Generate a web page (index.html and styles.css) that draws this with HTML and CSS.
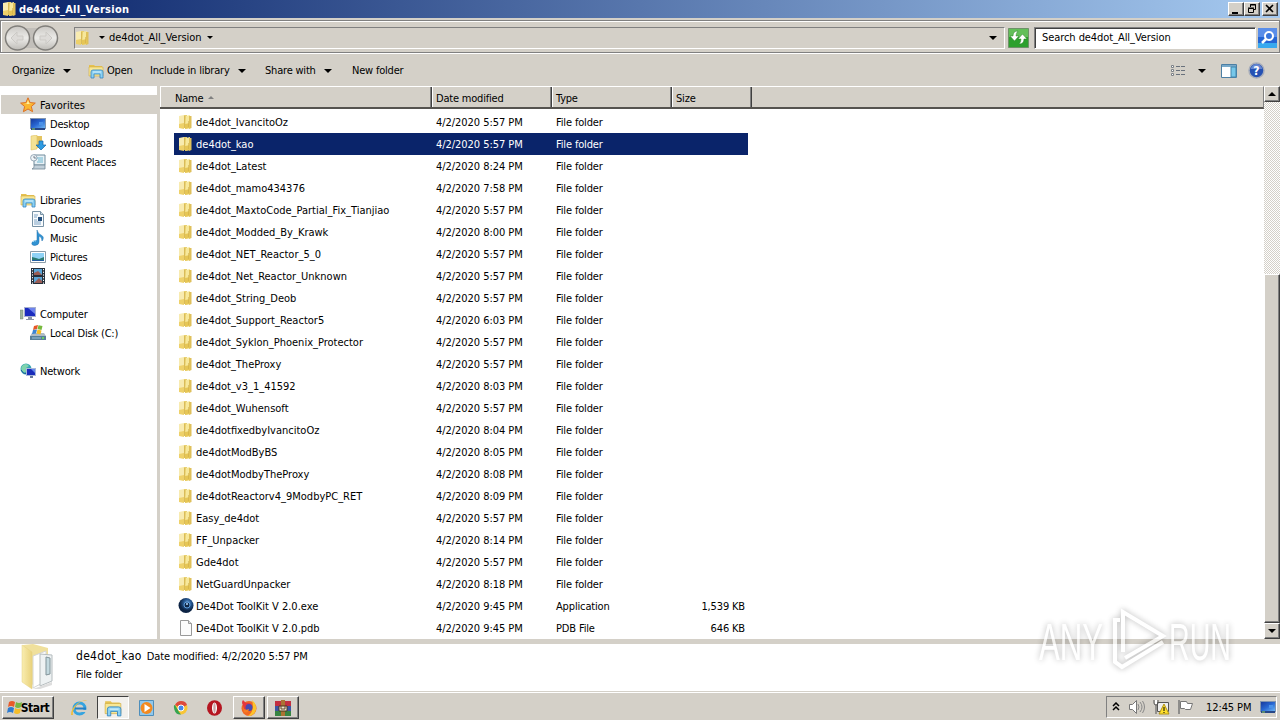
FILE: index.html
```html
<!DOCTYPE html>
<html lang="en">
<head>
    <meta charset="UTF-8">
    <meta name="viewport" content="width=device-width, initial-scale=1.0">
    <title>de4dot_All_Version</title>
    <link rel="stylesheet" href="styles.css">
</head>
<body>
    <svg class="defs" width="0" height="0">
        <defs>
            <linearGradient id="gold"><stop offset="0" stop-color="#f9edb0"/><stop offset="1" stop-color="#e9d27c"/></linearGradient>
            <linearGradient id="blue" x1="0" y1="0" x2="1" y2="1"><stop offset="0" stop-color="#173a9c"/><stop offset=".5" stop-color="#2867d2"/><stop offset="1" stop-color="#6db5f3"/></linearGradient>
            <linearGradient id="pale" x2="0" y2="1"><stop offset="0" stop-color="#c9c7c3"/><stop offset=".5" stop-color="#ecebe8"/><stop offset="1" stop-color="#bdbbb6"/></linearGradient>
            <radialGradient id="orb" cx=".6" cy=".35"><stop offset="0" stop-color="#79aade"/><stop offset=".5" stop-color="#255791"/><stop offset="1" stop-color="#0c2344"/></radialGradient>
        </defs>
        <symbol id="folder" viewBox="0 0 16 16">
            <path d="M1 2 6 1v13l-5-1z" fill="#f8ebb0"/>
            <path d="M6 1h3v13H6z" fill="#e8cf6e"/>
            <path d="M8 2 12 1v13l-5 1z" fill="#f7e89b"/>
            <path d="M11 2h2.500v12l-2.500 1z" fill="#dfc05a"/>
            <path d="M1 10 6 9v6l-5-1z" fill="#eed16a"/>
            <path d="M7 10 12 9v5l-5 1z" fill="#e6c656"/>
            <path d="M6.500 2v12M10.500 7v6" stroke="#cfad4a" stroke-width=".6"/>
        </symbol>
        <symbol id="library" viewBox="0 0 16 16">
            <path d="M1 2h5l1 1h7v9H1z" fill="#e5c150"/>
            <path d="M1 4h14v9H1z" fill="#f8e795" stroke="#d0ac45" stroke-width=".6"/>
            <path d="M3 15V9q0-2 2-2h8q2 0 2 2v6h-3v-4H6v4z" fill="#8cd1f2" stroke="#3587c1" stroke-width=".8"/>
            <path d="M5 9h8" stroke="#d6f2fd"/>
        </symbol>
        <symbol id="star" viewBox="0 0 16 16">
            <path d="m8 .8 2.1 4.8 5.2.5-4 3.4 1.3 5.2L8 12l-4.6 2.7 1.2-5.2-4-3.4 5.3-.5z" fill="#fbb630" stroke="#dd7125"/>
            <path d="m8 3 1.2 3.6 3 .3H4l2.8-.3z" fill="#fff0a1"/>
        </symbol>
        <symbol id="desktop" viewBox="0 0 16 16">
            <path d="M0 2h16v11H0z" fill="#8295af"/><path d="M1 3h14v9H1z" fill="url(#blue)"/>
            <path d="M1 12h14v2H1z" fill="#274787"/><path d="M9 6h4v3H9z" fill="#4a91e8"/><path d="M2 13h3" stroke="#8bd05f"/>
        </symbol>
        <symbol id="download" viewBox="0 0 16 16">
            <path d="M1 1 7 0v14l-6 1z" fill="#f5e295" stroke="#d8b957" stroke-width=".5"/><path d="M7 1h5v12H7z" fill="#e4c461"/>
            <path d="M9 6h4v4h3l-5 5-5-5h3z" fill="#2e9be2" stroke="#1765a7" stroke-width=".7"/>
        </symbol>
        <symbol id="recent" viewBox="0 0 16 16">
            <path d="M4 1h11v10H4z" fill="#e8f1f6" stroke="#718c9c"/><path d="M6 4h7M8 6h5M7 8h6" stroke="#6cb6cf"/>
            <path d="M4 11h11v4H2q3-1 2-4z" fill="#c2d0da" stroke="#6f8594" stroke-width=".8"/>
            <circle cx="3.8" cy="3.8" r="3.2" fill="#f0f5f8" stroke="#8398a8" stroke-width=".8"/><path d="M4 2v2h2" fill="none" stroke="#456" stroke-width=".7"/>
        </symbol>
        <symbol id="doc" viewBox="0 0 16 16">
            <path d="M2.500.5h8l3 3v12h-11z" fill="#f8fbfd" stroke="#7892a5"/><path d="M10.500.5v3h3" fill="#cbdbe6" stroke="#7892a5"/>
            <path d="M4 4h4M4 6h3M4 11h7M4 13h7M4 9h3" stroke="#7da2c4"/><path d="M8 6h4v4H8z" fill="#244f7d"/>
        </symbol>
        <symbol id="music" viewBox="0 0 16 16">
            <path d="M7 0q1 4 4 5 4 2 1 6 0-4-3-5v6q0 3-4 3.500-4 0-3-3 1-2 5-2z" fill="#3193d3" stroke="#1f70ae" stroke-width=".5"/><path d="M3 12q1-2 3-1" stroke="#a2dcf8" fill="none"/>
        </symbol>
        <symbol id="picture" viewBox="0 0 16 16">
            <path d="M.5 2.500h15v11H.5z" fill="#fff" stroke="#8b9ca8"/><path d="M2 4h12v8H2z" fill="#8fd2f5"/><path d="m2 8 4 1 3 1 5-2v4H2z" fill="#2a7b72"/><path d="M2 11h12v1H2z" fill="#225ea2"/>
        </symbol>
        <symbol id="video" viewBox="0 0 16 16">
            <path d="M1 0h14v16H1z" fill="#26303b"/><path d="M4 1h8v6H4zM4 9h8v6H4z" fill="#5aa5d7"/><path d="m4 5 4-2 4 4H4zM5 14l4-4 3 3v2H4z" fill="#9a5c54"/>
            <path d="M2.500 1v15M13.500 1v15" stroke="#fff" stroke-dasharray="1.200 1.500"/>
        </symbol>
        <symbol id="computer" viewBox="0 0 16 16">
            <path d="M0 4h3v9H0z" fill="#9eb49c" stroke="#718879" stroke-width=".5"/><path d="M4 1h12v10H4z" fill="#a6b0cf"/><path d="M5 2h10v8H5z" fill="#1a2bbf"/><path d="m8 2 7 0v6z" fill="#6d83ed"/><path d="M8 11h4v2h2v1H6v-1h2z" fill="#8994a9"/>
        </symbol>
        <symbol id="disk" viewBox="0 0 16 16">
            <path d="m2 8-2 3v4h16v-4l-2-3z" fill="#aebbc5"/><path d="M0 11h16v4H0z" fill="#587f98"/><path d="M2 13h9" stroke="#9ac2d9"/><path d="M12 12h2v2h-2z" fill="#6ad060"/>
            <path d="m4 1 4-1-1 4-4 1z" fill="#e75726"/><path d="m8.500.3 4 .7-1 4-4-1z" fill="#77b93c"/><path d="m3 5 4-.5-1 4-4 .5z" fill="#3c85d3"/><path d="m7.500 4.500 4 1-1 4-4-1z" fill="#f5bd25"/>
        </symbol>
        <symbol id="network" viewBox="0 0 16 16">
            <circle cx="6" cy="6" r="5.500" fill="#37a6b3"/><path d="M2 3q4-4 7 0L6 5l1 3-3 2Q0 8 2 3z" fill="#7fd3ad"/><path d="M1 7q2 4 6 4" stroke="#1d5b9b" fill="none"/>
            <path d="M6 5h10v8H6z" fill="#a9b8d8"/><path d="M7 6h8v6H7z" fill="#192cba"/><path d="m11 6 4 0v4z" fill="#6488ec"/><path d="M10 13h3v2h-3z" fill="#68799a"/>
        </symbol>
        <symbol id="flag" viewBox="0 0 18 18">
            <path d="M4 3q3-2 6 0L9 8Q6 6 3 8z" fill="#e85b2a"/><path d="M11 3q3 2 6 0l-1 5q-3 2-6 0z" fill="#75b743"/>
            <path d="M3 9q3-2 6 0l-1 5q-3-2-6 0z" fill="#2e7bd0"/><path d="M10 9q3 2 6 0l-1 5q-3 2-6 0z" fill="#f4bd2b"/>
        </symbol>
    </svg>

    <div class="window">
        <header class="title-bar">
            <svg class="icon"><use href="#folder"/></svg>
            <h1>de4dot_All_Version</h1>
            <div class="window-btns">
                <button><svg width="14" height="12"><path d="M3 9h6v2H3z"/></svg></button>
                <button><svg width="14" height="12"><path d="M5.500 4V1.500h5v5H9M5 2h6M3.500 5.500h5v4h-5zM3 5h6" fill="none" stroke="#000"/></svg></button>
                <button class="close"><svg width="14" height="12"><path d="m3 2 7 7M10 2 3 9" stroke="#000" stroke-width="1.600"/></svg></button>
            </div>
        </header>

        <div class="address-bar">
            <svg class="nav-arrows" width="60" height="28" viewBox="0 0 60 28">
                <path d="M14 4h32v20H14z" fill="#c2bfba"/>
                <circle cx="14.500" cy="14" r="12" fill="url(#pale)" stroke="#817f7b" stroke-width="1.500"/>
                <circle cx="42.500" cy="14" r="12" fill="url(#pale)" stroke="#817f7b" stroke-width="1.500"/>
                <path d="m14 8-6 6 6 6v-4h6v-4h-6zM43 8l6 6-6 6v-4h-6v-4h6z" fill="#dddbd8" stroke="#cbc9c5"/>
            </svg>
            <div class="path">
                <svg class="icon"><use href="#folder"/></svg>
                <i class="arrow small"></i><span class="path-name">de4dot_All_Version</span><i class="arrow small"></i>
                <i class="arrow path-drop"></i>
            </div>
            <svg class="refresh" width="21" height="20" viewBox="0 0 21 20"><path d="M.5.500h20v19H.5z" fill="#2da02d" stroke="#6e9269"/><path d="M1 1h19v8H1z" fill="#63bf59"/><path d="M10 3Q5 3 5 8H2l4.500 5L11 8H8q0-3 2-5zM11 16q5 0 5-5h3l-4.500-5L10 11h3q0 3-2 5z" fill="#fff" stroke="#278422" stroke-width=".5"/></svg>
            <div class="search">Search de4dot_All_Version</div>
            <svg class="search-btn" width="19" height="20" viewBox="0 0 19 20"><path d="M0 0h19v20H0z" fill="#2465d5"/><path d="M0 0h19v9H0z" fill="#5a8ee9"/><path d="M0 15h19v5H0z" fill="#38a9ef"/><circle cx="11" cy="8" r="4" fill="#3975dc" stroke="#fff" stroke-width="2"/><path d="m8 11-4 4" stroke="#fff" stroke-width="2.500"/></svg>
        </div>

        <div class="toolbar">
            <span class="tool organize">Organize<i class="arrow"></i></span>
            <span class="tool open"><svg class="icon"><use href="#library"/></svg>Open</span>
            <span class="tool include">Include in library<i class="arrow"></i></span>
            <span class="tool share">Share with<i class="arrow"></i></span>
            <span class="tool">New folder</span>
            <div class="view-tools">
                <svg width="16" height="14"><path d="M1.500 1.500h2v2h-2zM1.500 5.500h2v2h-2zM1.500 9.500h2v2h-2z" fill="#fff" stroke="#7b8187"/><path d="M6 2.500h4M11 2.500h4M6 6.500h4M11 6.500h4M6 10.500h4M11 10.500h4" stroke="#69717c"/></svg>
                <i class="arrow"></i>
                <svg class="preview" width="16" height="14"><path d="M.5.500h15v13H.5z" fill="#fff" stroke="#4c7fa4"/><path d="M1 1h14v2H1z" fill="#78a9c9"/><path d="M10 3h5v10h-5z" fill="#76c7e9" stroke="#4386ac"/></svg>
                <svg width="17" height="17"><circle cx="8.500" cy="8.500" r="7.500" fill="#2551b3" stroke="#a7adba" stroke-width="1.500"/><path d="M2.500 7q2-5 6-5t6 5z" fill="#6587d2"/><text class="help" x="5.300" y="13">?</text></svg>
            </div>
        </div>

        <main class="main">
            <nav class="sidebar">
                <a class="root active"><svg class="icon"><use href="#star"/></svg>Favorites</a>
                <a><svg class="icon"><use href="#desktop"/></svg>Desktop</a>
                <a><svg class="icon"><use href="#download"/></svg>Downloads</a>
                <a><svg class="icon"><use href="#recent"/></svg>Recent Places</a>
                <a class="root gap"><svg class="icon"><use href="#library"/></svg>Libraries</a>
                <a><svg class="icon"><use href="#doc"/></svg>Documents</a>
                <a><svg class="icon"><use href="#music"/></svg>Music</a>
                <a><svg class="icon"><use href="#picture"/></svg>Pictures</a>
                <a><svg class="icon"><use href="#video"/></svg>Videos</a>
                <a class="root gap"><svg class="icon"><use href="#computer"/></svg>Computer</a>
                <a><svg class="icon"><use href="#disk"/></svg>Local Disk (C:)</a>
                <a class="root gap"><svg class="icon"><use href="#network"/></svg>Network</a>
            </nav>
            <section class="files">
                <div class="file-head">
                    <div class="name">Name<i class="sort"></i></div>
                    <div>Date modified</div>
                    <div>Type</div>
                    <div class="size">Size</div>
                </div>
                <div id="fileList"></div>
            </section>
            <div class="scrollbar">
                <button><i class="arrow up"></i></button>
                <div class="thumb"></div>
                <button><i class="arrow"></i></button>
            </div>
        </main>

        <footer class="details">
            <svg class="big-folder" width="36" height="46" viewBox="0 0 36 46">
                <path d="m3 1 10-1 15 4v8l-10 30-8-2z" fill="#f0e09c"/>
                <path d="m13 12 13-5v30l-13 7z" fill="#fff" stroke="#d3d5d6"/>
                <path d="m20 10 12 1v26l-12 5z" fill="#eef2f3" stroke="#b5bcbe"/>
                <path d="m26 13 4 1v16l-4 1z" fill="#c3d9df" stroke="#82949a"/>
                <path d="m2 1 10 7v37L2 38z" fill="url(#gold)" stroke="#e4d080" stroke-width=".5"/>
                <path d="m13 45 19-7v3l-12 4z" fill="#dedede"/>
            </svg>
            <div class="details-text">
                <div><span class="details-name">de4dot_kao</span><span class="details-date">Date modified: 4/2/2020 5:57 PM</span></div>
                <div>File folder</div>
            </div>
        </footer>
    </div>

    <div class="taskbar">
        <button class="start"><svg width="18" height="18"><use href="#flag"/></svg>Start</button>
        <div class="tasks">
            <span class="task"><svg width="18" height="18" viewBox="0 0 18 18"><circle cx="9.500" cy="9.500" r="5.500" fill="none" stroke="#35a4e0" stroke-width="3"/><path d="M5 9.500h11" stroke="#247fc4" stroke-width="2"/><path d="M12 11h5v2h-5z" fill="#d4d0c8"/><path d="M1 16Q1 9 8 4q7-4 9-2-6-1-11 5-4 5-3 9z" fill="#efbd3c"/></svg></span>
            <span class="task pressed"><svg width="18" height="18"><use href="#library"/></svg></span>
            <span class="task"><svg width="18" height="18" viewBox="0 0 18 18"><path d="M1.500 1.500h14v15h-14z" fill="#91c8ec" stroke="#4e8ebb"/><circle cx="8.500" cy="9" r="6" fill="#f38a20"/><path d="m6.500 5 6 4-6 4z" fill="#fff"/></svg></span>
            <span class="task"><svg width="18" height="18" viewBox="0 0 18 18"><circle cx="9" cy="9" r="6.500" fill="#f8c536"/><path d="M9 9 3 6q2-4 6-4 5 0 6 4z" fill="#dd493c"/><path d="m3 6 4 7 2 2.500Q4 16 2.500 11T3 6z" fill="#35a451"/><circle cx="9" cy="9" r="3" fill="#4587ed" stroke="#fff"/></svg></span>
            <span class="task"><svg width="18" height="18" viewBox="0 0 18 18"><ellipse cx="8.500" cy="9" rx="7.500" ry="7.800" fill="#b51621"/><ellipse cx="8.500" cy="9" rx="2.500" ry="5.500" fill="#fff"/><ellipse cx="8.500" cy="9" rx="1.200" ry="5" fill="#c9a7a8"/></svg></span>
            <span class="task raised"><svg width="18" height="18" viewBox="0 0 18 18"><circle cx="9" cy="9.500" r="7.500" fill="#f16824"/><path d="M12 1q5 4 4 10-2 6-8 6 7-5 4-16z" fill="#fbc32b"/><path d="M2 4q0-2 1-3l3 3q5-1 6 3 1 5-4 5-4 0-4-3z" fill="#e4373f"/><circle cx="9" cy="8.500" r="3.500" fill="#494ab1"/><path d="M3 9q2 3 6 1-1 5-5 3z" fill="#f57d25"/></svg></span>
            <span class="task raised"><svg width="18" height="18" viewBox="0 0 18 18"><path d="M1 2h16v5H1z" fill="#c22f40"/><path d="M1 7h16v5H1z" fill="#3b55a4"/><path d="M1 12h16v5H1z" fill="#368442"/><path d="M7 1h4v16H7z" fill="#ab7333"/><path d="M5 7h8v5H5z" fill="#ece4cb" stroke="#4b3421"/><path d="M7 7v3h4V7" fill="none" stroke="#65472c"/></svg></span>
        </div>
        <div class="tray">
            <svg class="chevrons" width="8" height="10"><path d="m1 4 3-3 3 3M1 8l3-3 3 3" fill="none" stroke="#000" stroke-width="1.500"/></svg>
            <svg width="18" height="16" viewBox="0 0 18 16"><path d="M1.500 5.500h3l4-4v13l-4-4h-3z" fill="#fff" stroke="#777"/><path d="M10 5q2 3 0 6M12 3q4 5 0 10M14.500 2q4 6 0 12" fill="none" stroke="#888"/></svg>
            <svg width="17" height="16" viewBox="0 0 17 16"><path d="M4.500 3.500h11v9h-11z" fill="#eee" stroke="#555"/><path d="M1 1v3q0 2 2 2v9M5 1v3q0 2-2 2" fill="none" stroke="#555"/><path d="M2 1h2v4H2z" fill="#fff"/><path d="m11 5 5 10H6z" fill="#ffe02c" stroke="#b19316"/><path d="M11 8v4M11 13v1" stroke="#000"/></svg>
            <svg width="17" height="16" viewBox="0 0 17 16"><path d="M2 1v14" stroke="#777" stroke-width="1.500"/><path d="M3.500 2.500h6l1 2h5l-2 6h-5l-1-1h-4z" fill="#fff" stroke="#777"/></svg>
            <span class="clock">12:45 PM</span>
            <svg class="icon"><use href="#desktop"/></svg>
        </div>
    </div>

    <svg class="watermark" width="204" height="76" viewBox="0 0 204 76">
        <text x="3" y="55" textLength="64" lengthAdjust="spacingAndGlyphs">ANY</text>
        <path d="M87 47V7l40 24-38 22M84 15h-5v42l7 5 41-25" class="play"/>
        <text x="133" y="55" textLength="62" lengthAdjust="spacingAndGlyphs">RUN</text>
    </svg>

    <script>
        const files = [
            ["de4dot_IvancitoOz", "5:57"],
            ["de4dot_kao", "5:57"],
            ["de4dot_Latest", "8:24"],
            ["de4dot_mamo434376", "7:58"],
            ["de4dot_MaxtoCode_Partial_Fix_Tianjiao", "5:57"],
            ["de4dot_Modded_By_Krawk", "8:00"],
            ["de4dot_NET_Reactor_5_0", "5:57"],
            ["de4dot_Net_Reactor_Unknown", "5:57"],
            ["de4dot_String_Deob", "5:57"],
            ["de4dot_Support_Reactor5", "6:03"],
            ["de4dot_Syklon_Phoenix_Protector", "5:57"],
            ["de4dot_TheProxy", "5:57"],
            ["de4dot_v3_1_41592", "8:03"],
            ["de4dot_Wuhensoft", "5:57"],
            ["de4dotfixedbyIvancitoOz", "8:04"],
            ["de4dotModByBS", "8:05"],
            ["de4dotModbyTheProxy", "8:08"],
            ["de4dotReactorv4_9ModbyPC_RET", "8:09"],
            ["Easy_de4dot", "5:57"],
            ["FF_Unpacker", "8:14"],
            ["Gde4dot", "5:57"],
            ["NetGuardUnpacker", "8:18"],
            ["De4Dot ToolKit V 2.0.exe", "9:45", "Application", "1,539 KB"],
            ["De4Dot ToolKit V 2.0.pdb", "9:45", "PDB File", "646 KB"]
        ];

        const icons = {
            "Application": '<svg class="icon" viewBox="0 0 16 16"><circle cx="8" cy="7.500" r="7.500" fill="url(#orb)"/><circle cx="9" cy="7" r="3" fill="#102747" stroke="#5e9ddc"/><circle cx="9" cy="6" r="1" fill="#b5dcff"/></svg>',
            "PDB File": '<svg class="icon" viewBox="0 0 16 16"><path d="M2.500.5h8l3 3v12h-11z" fill="#fbfbfb" stroke="#999"/><path d="M10.500.5v3h3" fill="#ddd" stroke="#999"/></svg>'
        };

        const fileList = document.getElementById("fileList");

        files.forEach(function([name, time, type = "File folder", size = ""]) {
            const row = document.createElement("div");
            row.className = name === "de4dot_kao" ? "file-row selected" : "file-row";
            const icon = icons[type] || '<svg class="icon"><use href="#folder"/></svg>';
            row.innerHTML = `<div class="name">${icon}<span>${name}</span></div><div class="date">4/2/2020 ${time} PM</div><div>${type}</div><div class="size">${size}</div>`;
            fileList.appendChild(row);
        });
    </script>
</body>
</html>
```
FILE: styles.css
```css
* {
    box-sizing: border-box;
}

body {
    margin: 0;
    width: 1280px;
    height: 720px;
    overflow: hidden;
    background-color: #d4d0c8;
    color: #000;
    font-family: "DejaVu Sans Condensed", "DejaVu Sans", sans-serif;
    font-stretch: condensed;
    font-size: 11px;
    letter-spacing: -0.2px;
    white-space: nowrap;
}

svg {
    display: block;
    flex: none;
}

.defs {
    position: absolute;
}

.icon {
    width: 16px;
    height: 16px;
}

button {
    display: flex;
    align-items: center;
    justify-content: center;
    padding: 0;
    border: 1px solid;
    border-color: #fff #404040 #404040 #fff;
    box-shadow: inset -1px -1px #808080;
    background-color: #d4d0c8;
    color: #000;
    font: inherit;
}

.arrow {
    flex: none;
    border: 4px solid transparent;
    border-top-color: #000;
    border-bottom: 0;
}

.arrow.small {
    border-width: 3px 3px 0;
}

.arrow.up {
    border-top: 0;
    border-bottom: 4px solid #000;
}

.window {
    display: flex;
    flex-direction: column;
    height: 692px;
}

.title-bar {
    display: flex;
    align-items: center;
    height: 18px;
    padding: 0 2px 0 2px;
    background: linear-gradient(to right, #0a246a, #a6caf0);
}

.title-bar h1 {
    flex: 1;
    margin: 0 0 0 1px;
    color: #fff;
    font-size: 11px;
    letter-spacing: 0.27px;
}

.window-btns {
    display: flex;
}

.window-btns button {
    width: 16px;
    height: 14px;
}

.window-btns .close {
    margin-left: 2px;
}

.address-bar {
    display: flex;
    align-items: center;
    height: 36px;
    padding: 2px 2px 0 3px;
    border-top: 2px solid #d4d0c8;
    border-bottom: 1px solid #fff;
    box-shadow: inset 1px 1px #808080, inset -1px -1px #808080, inset 2px 2px #fff;
}

.path {
    display: flex;
    align-items: center;
    width: 931px;
    height: 22px;
    margin-left: 11px;
    border: 1px solid;
    border-color: #808080 #fff #fff #808080;
}

.path .small:nth-of-type(1) {
    margin-left: 8px;
}

.path-name {
    margin: 0 6px 0 4px;
    padding-bottom: 1px;
    letter-spacing: -0.05px;
}

.path-drop {
    margin-left: auto;
    margin-right: 7px;
}

.refresh {
    margin-left: 3px;
}

.search {
    width: 222px;
    height: 22px;
    margin-left: 5px;
    padding-left: 7px;
    border: 1px solid;
    border-color: #808080 #fff #fff #808080;
    box-shadow: inset 1px 1px #404040;
    background-color: #fff;
    line-height: 20px;
    letter-spacing: -0.07px;
}

.search-btn {
    margin-left: 2px;
}

.toolbar {
    display: flex;
    align-items: center;
    height: 32px;
    padding: 1px 15px 0 12px;
}

.tool {
    display: flex;
    align-items: center;
}

.tool .arrow {
    margin-left: 8px;
}

.tool .icon {
    margin-right: 3px;
}

.organize {
    width: 76px;
}

.open {
    width: 62px;
}

.include {
    width: 115px;
}

.share {
    width: 87px;
}

.view-tools {
    display: flex;
    align-items: center;
    margin-left: auto;
}

.view-tools .arrow {
    margin: 0 15px 0 12px;
}

.preview {
    margin-right: 11px;
}

.help {
    fill: #fff;
    font-size: 12px;
    font-weight: bold;
}

.main {
    display: flex;
    height: 553px;
    background-color: #fff;
}

.sidebar {
    width: 160px;
    padding-top: 9px;
    border-right: 3px solid #d4d0c8;
}

.sidebar a {
    display: flex;
    align-items: center;
    height: 19px;
    padding-top: 2px;
    padding-left: 30px;
}

.sidebar .icon {
    margin: -1px 4px 0 0;
}

.sidebar .root {
    padding-left: 20px;
}

.sidebar .active {
    margin-left: 1px;
    padding-left: 19px;
    background-color: #d4d0c8;
    letter-spacing: 0.05px;
}

.sidebar .gap {
    margin-top: 19px;
}

.files {
    flex: 1;
}

.file-head {
    display: flex;
    height: 23px;
    margin-bottom: 2px;
    border: solid;
    border-width: 1px 1px 2px 0;
    border-color: #fff #808080 #55534f;
    background-color: #d4d0c8;
    line-height: 23px;
}

.file-head div {
    width: 120px;
    padding-left: 4px;
    border-right: 1px solid #404040;
    box-shadow: inset 1px 0 #fff, inset -1px 0 #808080;
}

.file-head .name {
    width: 272px;
    padding-left: 15px;
}

.file-head .size {
    width: 80px;
}

.sort {
    display: inline-block;
    margin: 0 0 3px 5px;
    border: 3px solid transparent;
    border-top: 0;
    border-bottom-color: #808080;
}

.file-row {
    display: flex;
    align-items: center;
    width: 574px;
    height: 22px;
    margin-left: 14px;
    letter-spacing: -0.15px;
}

.file-row div {
    width: 120px;
}

.file-row .name {
    display: flex;
    align-items: center;
    width: 262px;
    padding-left: 4px;
    letter-spacing: 0;
}

.file-row .date {
    letter-spacing: -0.05px;
}

.file-row .icon {
    margin-right: 2px;
}

.file-row .size {
    width: 69px;
    text-align: right;
}

.selected {
    background-color: #0a246a;
    color: #fff;
}

.scrollbar {
    display: flex;
    flex-direction: column;
    width: 16px;
    background: repeating-conic-gradient(#fff 0 25%, #d4d0c8 0 50%) 0 0 / 2px 2px;
}

.scrollbar button {
    height: 16px;
}

.thumb {
    height: 349px;
    margin-top: auto;
    border: 1px solid;
    border-color: #fff #404040 #404040 #fff;
    box-shadow: inset -1px -1px #808080;
    background-color: #d4d0c8;
}

.details {
    display: flex;
    height: 53px;
    padding-left: 20px;
    border-top: 5px solid #d4d0c8;
    border-bottom: 1px solid #d4d0c8;
    background-color: #fff;
}

.details-text {
    margin-left: 20px;
    padding-top: 3px;
    line-height: 18px;
}

.details-name {
    margin-right: 5px;
    font-size: 12px;
    letter-spacing: 0.3px;
}

.details-date {
    letter-spacing: -0.1px;
}

.taskbar {
    display: flex;
    height: 28px;
    padding: 3px 3px 2px 2px;
    border-top: 1px solid #fff;
}

.start {
    width: 52px;
    height: 23px;
    font-weight: bold;
    font-size: 12px;
    letter-spacing: -0.4px;
}

.start svg {
    margin: 0 -2px 0 -2px;
}

.tasks {
    display: flex;
    margin-left: 9px;
}

.task {
    display: flex;
    align-items: center;
    justify-content: center;
    width: 32px;
    height: 23px;
    margin-right: 2px;
}

.task.raised {
    border: 1px solid;
    border-color: #fff #404040 #404040 #fff;
    box-shadow: inset -1px -1px #808080;
}

.task.pressed {
    border: 1px solid;
    border-color: #404040 #fff #fff #404040;
    background-color: #f2f0ec;
}

.tray {
    display: flex;
    align-items: center;
    width: 171px;
    height: 22px;
    margin-left: auto;
    padding-left: 5px;
    border: 1px solid;
    border-color: #808080 #fff #fff #808080;
}

.chevrons {
    margin-right: 8px;
}

.tray svg + svg {
    margin-right: 7px;
}

.clock {
    margin: 0 9px 0 5px;
    letter-spacing: -0.1px;
}

.watermark {
    position: absolute;
    left: 1036px;
    top: 605px;
    filter: drop-shadow(0 0 3px rgba(0, 0, 0, 0.4));
    opacity: 0.7;
    fill: #fff;
    font-family: "Liberation Sans", sans-serif;
    font-size: 51px;
    letter-spacing: 0;
}

.play {
    fill: none;
    stroke: #fff;
    stroke-width: 4px;
}
```
